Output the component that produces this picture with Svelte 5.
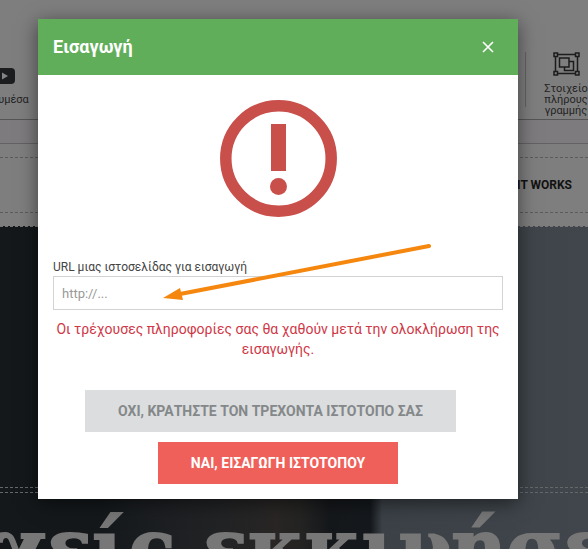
<script>
  let url = $state('');
</script>

<div class="page">
  <header class="toolbar">
    <a class="tool media" href="#media">
      <svg width="20" height="16" viewBox="0 0 20 16" aria-hidden="true">
        <rect width="20" height="16" rx="4" fill="#1b1d1f" />
        <path d="M7 4.500v7l6-3.500z" fill="#858585" />
      </svg>
      <span>Πολυμέσα</span>
    </a>
    <a class="tool full" href="#full">
      <svg width="27" height="24" viewBox="0 0 27 24" fill="none" stroke="#1c1c1c" stroke-width="1.500" aria-hidden="true">
        <path d="M4 2.500h19M4 21.500h19M2.500 4v16M24.500 4v16" />
        <path d="M1 1h3.500v3.500H1zM22.500 1H26v3.500h-3.500zM1 19.500h3.500V23H1zM22.500 19.500H26V23h-3.500z" />
        <path d="M6.500 6h9.500v9H6.500zM16 9.500h4.500v9h-9V15" />
      </svg>
      <span>Στοιχείο<br />πλήρους<br />γραμμής</span>
    </a>
  </header>
  <div class="strip"></div>
  <nav><div class="navrow"><a href="#how">HOW IT WORKS</a></div></nav>
  <section class="hero">
    <div class="banner"></div>
    <div class="slogan"><h1>χείς εκκινήσεις</h1></div>
  </section>
</div>

<div class="overlay">
  <div class="dialog" role="dialog" aria-modal="true" aria-labelledby="dialog-title">
    <div class="head">
      <h2 id="dialog-title">Εισαγωγή</h2>
      <button class="close" aria-label="Κλείσιμο">
        <svg width="12" height="12" viewBox="0 0 12 12" stroke="#fff" stroke-width="1.600" aria-hidden="true">
          <path d="M1 1l10 10M11 1L1 11" />
        </svg>
      </button>
    </div>
    <div class="body">
      <svg class="alert" width="118" height="118" viewBox="0 0 118 118" aria-hidden="true">
        <circle cx="59.500" cy="59.500" r="52.700" fill="none" stroke="#c94f4b" stroke-width="11.500" />
        <path d="M52 25h15v47h-15z" fill="#c94f4b" />
        <circle cx="59.500" cy="87.500" r="8.500" fill="#c94f4b" />
      </svg>
      <label for="site-url">URL μιας ιστοσελίδας για εισαγωγή</label>
      <input id="site-url" type="text" placeholder="http://..." bind:value={url} />
      <p>Οι τρέχουσες πληροφορίες σας θα χαθούν μετά την ολοκλήρωση της εισαγωγής.</p>
      <button class="action keep">ΟΧΙ, ΚΡΑΤΗΣΤΕ ΤΟΝ ΤΡΕΧΟΝΤΑ ΙΣΤΟΤΟΠΟ ΣΑΣ</button>
      <button class="action go">ΝΑΙ, ΕΙΣΑΓΩΓΗ ΙΣΤΟΤΟΠΟΥ</button>
    </div>
    <svg class="arrow" width="272" height="60" viewBox="0 0 272 60" aria-hidden="true">
      <path d="M267 4L18 52" stroke="#f5870f" stroke-width="4" stroke-linecap="round" />
      <path d="M1 56L18 46L21 58z" fill="#f5870f" />
    </svg>
  </div>
</div>

<style>
  :global(body) {
    margin: 0;
    background: #14181b;
  }
  .page,
  .overlay {
    font-family: Roboto, "Noto Sans", sans-serif;
  }
  .page {
    height: 100vh;
    overflow: hidden;
    display: flex;
    flex-direction: column;
    background: #7e7e7e;
  }
  .toolbar {
    box-sizing: border-box;
    height: 120px;
    flex: none;
    display: flex;
    justify-content: space-between;
    align-items: flex-start;
    padding-top: 52px;
    overflow: hidden;
    border-bottom: 1px solid #555;
  }
  .tool {
    display: flex;
    flex-direction: column;
    align-items: center;
    color: #242424;
    font-size: 11px;
    line-height: 11px;
    text-align: center;
    text-decoration: none;
  }
  .media {
    margin-left: -22px;
    padding-top: 16px;
    gap: 10px;
  }
  .media svg {
    margin-left: 4px;
  }
  .full {
    box-sizing: border-box;
    width: 63px;
    height: 55px;
    padding-left: 18px;
    gap: 7px;
    border-left: 1px solid #626262;
  }
  .full svg {
    flex: none;
  }
  .strip {
    height: 23px;
    flex: none;
    background: #7d7b7d;
    border-bottom: 1px solid #626262;
  }
  nav {
    flex: none;
    padding: 13px 0;
  }
  .navrow {
    height: 56px;
    display: flex;
    align-items: center;
    justify-content: flex-end;
    padding-right: 16px;
    border: 1px dashed #5b5b5b;
    border-width: 1px 0;
    box-sizing: border-box;
  }
  .navrow a {
    color: #121212;
    font-size: 12px;
    font-weight: 700;
    text-decoration: none;
  }
  .hero {
    flex: 1;
    display: flex;
    flex-direction: column;
    border-top: 1px dashed #777;
    background: linear-gradient(90deg, #14181a 0 17%, #1a1d20 24%, #222325 38%, #292625 47%, #242423 51%, #15181b 56%, #15191d 63%, #3b4147 65%, #40464c 100%);
  }
  .banner {
    height: 260px;
    flex: none;
    border-bottom: 1px dashed #64686b;
  }
  .slogan {
    flex: 1;
    margin-top: 4px;
    padding-top: 12px;
    border-top: 1px dashed #64686b;
  }
  h1 {
    margin: 0 0 0 -4px;
    color: #777;
    font-family: "DejaVu Serif", serif;
    font-size: 76px;
    line-height: 86px;
    font-weight: 700;
    -webkit-text-stroke: 2px #777;
    white-space: nowrap;
  }
  .overlay {
    position: absolute;
    inset: 0;
    overflow: hidden;
    padding: 19px 70px 0 38px;
  }
  .dialog {
    position: relative;
    background: #fff;
    box-shadow: 0 4px 18px rgba(0, 0, 0, 0.5);
  }
  .head {
    display: flex;
    align-items: center;
    justify-content: space-between;
    height: 56px;
    padding: 0 16px 0 15px;
    background: #60ae59;
    color: #fff;
  }
  h2 {
    margin: 0;
    font-size: 18px;
    line-height: 24px;
    font-weight: 700;
  }
  button {
    border: 0;
    font-family: inherit;
  }
  .close {
    display: flex;
    padding: 8px;
    background: transparent;
  }
  .body {
    display: flex;
    flex-direction: column;
    align-items: center;
    padding: 24px 15px 15px;
  }
  .alert {
    margin-bottom: 42px;
  }
  label {
    align-self: stretch;
    color: #444;
    font-size: 12px;
    line-height: 17px;
  }
  input {
    box-sizing: border-box;
    width: 100%;
    height: 34px;
    padding: 0 8px;
    border: 1px solid #d3d3d3;
    background: #fff;
    color: #444;
    font-family: inherit;
    font-size: 13px;
  }
  input::placeholder {
    color: #999;
  }
  p {
    margin: 9px 0 31px;
    color: #d03746;
    font-size: 14px;
    line-height: 20px;
    text-align: center;
  }
  .action {
    height: 42px;
    padding: 0 33px;
    font-size: 14px;
    font-weight: 700;
    white-space: nowrap;
  }
  .keep {
    margin: 0 15px 10px 0;
    background: #dbddde;
    color: #85888a;
  }
  .go {
    background: #f0605a;
    color: #fff;
  }
  .arrow {
    position: absolute;
    left: 124px;
    top: 223px;
  }
</style>
